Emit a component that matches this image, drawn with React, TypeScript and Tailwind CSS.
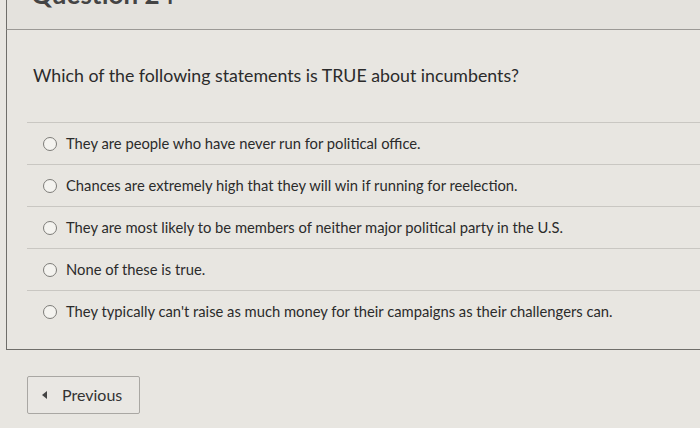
import React from 'react';

const answers = [
  'They are people who have never run for political office.',
  'Chances are extremely high that they will win if running for reelection.',
  'They are most likely to be members of neither major political party in the U.S.',
  'None of these is true.',
  "They typically can't raise as much money for their campaigns as their challengers can.",
];

const Radio = () => (
  <span className="inline-block w-[14px] h-[14px] rounded-full border-[1.5px] border-[#7d7c78] bg-[#f4f3ef] shrink-0" />
);

export default function App() {
  return (
    <div
      className="w-[700px] h-[428px] overflow-hidden bg-[#e8e6e1] text-[#2b2b2b]"
      style={{ fontFamily: 'Lato, "Open Sans", sans-serif' }}
    >
      {/* question heading, cut off by the top edge */}
      <div className="h-[30px] overflow-hidden border-b-[1.5px] border-[#9b9995] bg-[#e4e2dd] border-l-[1.5px] border-l-[#6f6e6a] ml-[6px]">
        <div className="-mt-[25px] pl-[24px] text-[26px] font-bold text-[#444]">Question 24</div>
      </div>

      {/* panel */}
      <div className="ml-[6px] border-l-[1.5px] border-b-[1.5px] border-[#6f6e6a] h-[320px] pl-[20px] pt-[32px]">
        <p className="text-[17.75px] leading-[26px] pl-[6px]">Which of the following statements is TRUE about incumbents?</p>
        <div className="mt-[34px]">
          {answers.map((a) => (
            <div key={a} className="h-[42px] border-t border-[#c9c7c2] flex items-center gap-[9px] pl-[16px]">
              <Radio />
              <span className="text-[14.75px]">{a}</span>
            </div>
          ))}
        </div>
      </div>

      {/* footer */}
      <div className="pl-[27px] pt-[26px]">
        <button className="w-[113px] h-[38px] border border-[#a9a7a3] rounded-[2px] bg-[#e9e7e3] flex items-center gap-[14px] pl-[14px] text-[16px] text-[#333]">
          <svg width="6" height="8" viewBox="0 0 6 8">
            <path d="M5 0 L0 4 L5 8 Z" fill="#444" />
          </svg>
          Previous
        </button>
      </div>
    </div>
  );
}
